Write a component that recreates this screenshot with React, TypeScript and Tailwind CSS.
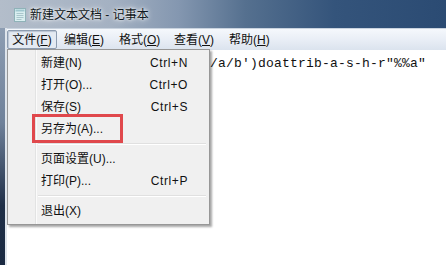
const cjk = { fontFamily: '"Liberation Sans", "Noto Sans CJK SC", sans-serif' };

type Item = { label: string; key?: string; sep?: boolean };

const fileMenu: Item[] = [
  { label: "新建(N)", key: "Ctrl+N" },
  { label: "打开(O)...", key: "Ctrl+O" },
  { label: "保存(S)", key: "Ctrl+S" },
  { label: "另存为(A)..." },
  { label: "", sep: true },
  { label: "页面设置(U)..." },
  { label: "打印(P)...", key: "Ctrl+P" },
  { label: "", sep: true },
  { label: "退出(X)" },
];

const menuBar = [
  ["文件(", "F", ")"],
  ["编辑(", "E", ")"],
  ["格式(", "O", ")"],
  ["查看(", "V", ")"],
  ["帮助(", "H", ")"],
];

function NotepadIcon() {
  return (
    <svg width="12" height="14" viewBox="0 0 12 14" className="shrink-0">
      <rect x="0.5" y="0.5" width="11" height="13" fill="#d9eef0" stroke="#8fb2b8" />
      <rect x="1.5" y="1.5" width="9" height="2" fill="#9fc7cf" />
      <path d="M2.5 5.5h7M2.5 7.5h7M2.5 9.5h7M2.5 11.5h5" stroke="#a9c6cc" strokeWidth="1" />
    </svg>
  );
}

export default function App() {
  return (
    <div className="relative w-[446px] h-[265px] overflow-hidden flex flex-col bg-white" style={cjk}>
      {/* title bar */}
      <div className="h-[28px] flex items-center gap-[4px] pl-[14px] pt-[2px] bg-[linear-gradient(90deg,#b3bdca_0%,#a4b1c2_25%,#8497b0_40%,#55708f_55%,#34547b_75%,#2b4b73_100%)]">
        <NotepadIcon />
        <span className="text-[12px] text-[#101820] [text-shadow:0_0_6px_#fff,0_0_3px_#fff]">
          新建文本文档 - 记事本
        </span>
      </div>

      <div className="flex flex-1">
        {/* left frame */}
        <div className="w-[7px] flex">
          <div className="w-[5px] bg-[linear-gradient(180deg,#8d9db2_0%,#6f819a_40%,#1f2f48_75%,#1a2a42_100%)]" />
          <div className="w-[2px] bg-[#dfe5ec]" />
        </div>

        <div className="flex-1 flex flex-col">
          {/* menu bar */}
          <div className="h-[22px] flex items-center bg-[linear-gradient(180deg,#f5f8fc_0%,#e9eef6_50%,#dbe3ee_100%)] border-t border-[#c9d3df]">
            {menuBar.map(([a, k, b], i) => (
              <div
                key={i}
                className={
                  "h-[19px] flex items-center text-[12px] text-[#111] " +
                  (i === 0
                    ? "w-[50px] justify-center border border-[#8d9cb0] rounded-[2px] bg-[#e4eaf2] shadow-[inset_1px_1px_1px_#b9c4d2]"
                    : "w-[55px] pl-[7px]")
                }
              >
                {a}
                <span className="underline">{k}</span>
                {b}
              </div>
            ))}
          </div>

          {/* edit area */}
          <div className="flex-1 bg-white pl-[203px]">
            <span
              className="text-[13px] leading-[24px] text-[#111] tracking-[0.2px]"
              style={{ fontFamily: '"Liberation Mono", monospace' }}
            >
              /a/b')doattrib-a-s-h-r"%%a"
            </span>
          </div>
        </div>
      </div>

      {/* dropdown menu */}
      <div className="absolute left-[7px] top-[49px] w-[203px] bg-[#f0f0f0] border border-[#979797] shadow-[2px_2px_2px_rgba(0,0,0,0.35)] py-[2px] flex flex-col">
        <div className="absolute left-[27px] top-0 bottom-0 w-[2px] border-l border-[#e2e3e3] bg-white/70" />
        {fileMenu.map((it, i) =>
          it.sep ? (
            <div key={i} className="h-[8px] flex items-center pl-[30px] pr-[3px]">
              <div className="flex-1 h-[2px] border-t border-[#e0e0e0] bg-white" />
            </div>
          ) : (
            <div key={i} className="relative h-[22px] flex items-center pl-[33px] pr-[21px] text-[12px] text-[#111]">
              <span className="flex-1">{it.label}</span>
              {it.key && <span className="tracking-[0.6px]">{it.key}</span>}
              {i === 3 && (
                <div className="absolute left-[24px] top-[-4px] w-[91px] h-[29px] border-[3px] border-[#e0484c]" />
              )}
            </div>
          )
        )}
      </div>
    </div>
  );
}
